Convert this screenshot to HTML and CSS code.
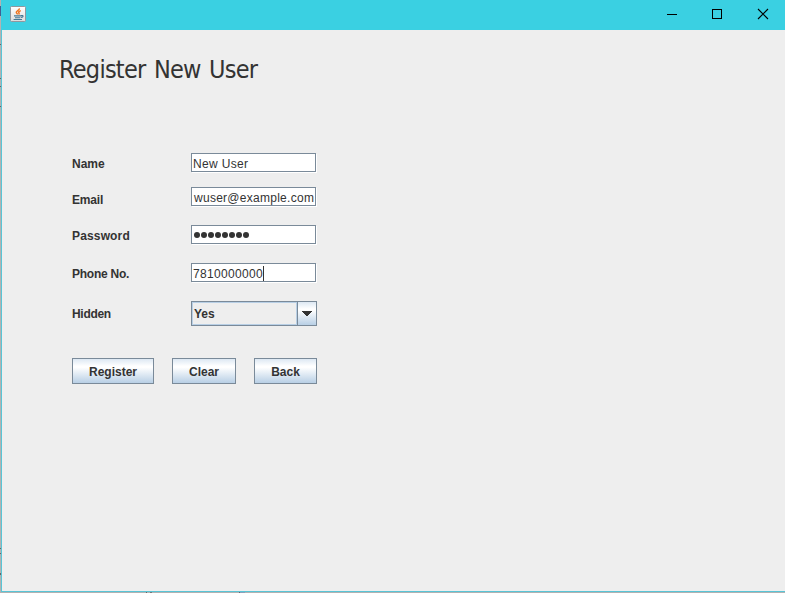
FILE: index.html
```
<!DOCTYPE html>
<html lang="en">
<head>
<meta charset="utf-8">
<title>Register New User</title>
<link rel="stylesheet" href="styles.css">
</head>
<body>
<div class="window">
  <header class="titlebar">
    <svg class="app-icon" width="16" height="16" viewBox="0 0 16 16">
      <defs><linearGradient id="tile" x1="0" y1="0" x2="0" y2="1"><stop offset="0" stop-color="#fff"/><stop offset="1" stop-color="#dcdcdc"/></linearGradient></defs>
      <rect x=".5" y=".5" width="15" height="15" rx="1" fill="url(#tile)" stroke="#92979e"/>
      <path d="M9.4 2.4C9.6 4.4 5.8 4.8 6.3 6.6C6.6 7.5 7.6 7.7 7.6 8.6M10.8 4.6C8.8 5.2 8.2 6.2 9.1 7.2C9.4 7.6 9 8 8.6 8.4" fill="none" stroke="#ee7420" stroke-width="1.5"/>
      <path d="M4 9.9H11M5 11.7H10.4M3.6 13.5H12M11 9.6C13.9 9 13.7 11 11 11.4" fill="none" stroke="#457894" stroke-width="1.1"/>
    </svg>
    <svg class="controls" width="103" height="12" viewBox="0 0 103 12">
      <path d="M1 6.5H11M46.5 1.5H55.5V10.5H46.5Z" fill="none" stroke="#000" shape-rendering="crispEdges"/>
      <path d="M92 1L102 11M102 1L92 11" fill="none" stroke="#000" stroke-width="1.1"/>
    </svg>
  </header>
  <main class="content">
    <h1 class="title">Register New User</h1>
    <form class="form">
      <div class="row row-name"><span class="label">Name</span><div class="field name"><span>New User</span></div></div>
      <div class="row row-email"><span class="label">Email</span><div class="field email"><span>wuser@example.com</span></div></div>
      <div class="row row-password"><span class="label">Password</span><div class="field password"><i></i><i></i><i></i><i></i><i></i><i></i><i></i><i></i></div></div>
      <div class="row row-phone"><span class="label">Phone No.</span><div class="field"><span>7810000000</span><b class="caret"></b></div></div>
      <div class="row row-hidden"><span class="label">Hidden</span>
        <div class="combo"><span class="combo-value">Yes</span><span class="combo-arrow"><svg width="10" height="5" viewBox="0 0 10 5" shape-rendering="crispEdges"><path d="M0 0H10V1H9V2H8V3H7V4H6V5H4V4H3V3H2V2H1V1H0Z" fill="#333"/></svg></span></div>
      </div>
      <div class="buttons">
        <button type="button" class="button register">Register</button>
        <button type="button" class="button clear">Clear</button>
        <button type="button" class="button back">Back</button>
      </div>
    </form>
  </main>
</div>
</body>
</html>
```
FILE: styles.css
```
* { box-sizing: border-box; }
body {
  margin: 0;
  padding: 0 0 1px 1px;
  height: 593px;
  overflow: hidden;
  /* bits of the desktop behind the window edge */
  background:
    linear-gradient(#3f5f93, #3f5f93) 0 6px / 1px 10px no-repeat,
    linear-gradient(#666, #666) 0 44px / 1px 1px no-repeat,
    linear-gradient(#666, #666) 0 78px / 1px 1px no-repeat,
    linear-gradient(#666, #666) 0 86px / 1px 1px no-repeat,
    linear-gradient(#666, #666) 0 106px / 1px 1px no-repeat,
    linear-gradient(#666, #666) 0 548px / 1px 1px no-repeat,
    linear-gradient(#666, #666) 0 553px / 1px 1px no-repeat,
    linear-gradient(#666, #666) 0 573px / 1px 2px no-repeat,
    linear-gradient(#666, #666) 146px 592px / 1px 1px no-repeat,
    linear-gradient(#777, #777) 150px 592px / 2px 1px no-repeat,
    linear-gradient(#667, #667) 239px 592px / 1px 1px no-repeat,
    linear-gradient(#8f9fb8, #8f9fb8) 240px 592px / 5px 1px no-repeat,
    #b2b2b2;
  color: #333;
  font: 12px/16px "Liberation Sans", Arial, sans-serif;
}
.window {
  height: 592px;
  background: #eee;
  border: solid #58c5d6;
  border-width: 0 0 1px 1px;
}
.titlebar {
  display: flex;
  justify-content: space-between;
  height: 30px;
  margin-left: -1px;
  padding: 6px 16px 0 9px;
  background: #3ad0e2;
}
.controls { margin-top: 2px; }
.content { padding: 22px 0 0 57px; }
.title {
  margin: 0;
  height: 36px;
  font: 25px/36px "DejaVu Sans Condensed", "DejaVu Sans", sans-serif;
  font-stretch: condensed;
  letter-spacing: -0.75px;
  word-spacing: 2px;
  white-space: nowrap;
}
.form { width: 245px; margin: 65px 0 0 13px; }
.row { display: flex; align-items: flex-start; }
.label { flex: none; width: 119px; font-weight: bold; }
.row-name { height: 34px; }
.row-email { height: 38px; }
.row-password, .row-phone { height: 38px; }
.row-hidden { height: 57px; }
.row-name .label { padding-top: 3px; }
.row-email .label { padding-top: 5px; letter-spacing: -0.2px; }
.row-password .label, .row-phone .label { padding-top: 3px; }
.row-password .label { letter-spacing: 0.15px; }
.row-phone .label { letter-spacing: -0.25px; }
.row-hidden .label { padding-top: 5px; letter-spacing: -0.3px; }
.field {
  display: flex;
  flex: none;
  align-items: center;
  width: 125px;
  height: 19px;
  padding: 2px 0 0 1px;
  background: #fff;
  border: 1px solid #7a8a99;
  box-shadow: 1px 1px #fff;
  letter-spacing: 0.33px;
  white-space: nowrap;
  overflow: hidden;
}
.email { padding-left: 2px; letter-spacing: 0.27px; }
.password { gap: 1px; padding: 1px 0 0 1.5px; }
.password i { width: 6px; height: 6px; border-radius: 50%; background: #333; }
.caret { width: 1px; height: 16px; background: #333; }
.combo {
  display: flex;
  flex: none;
  width: 126px;
  height: 25px;
  border: 1px solid #7a8a99;
  font-weight: bold;
}
.combo-value { flex: 1; padding: 3px 0 0 1px; border: 1px solid #b8cfe5; }
.combo-arrow {
  display: flex;
  align-items: center;
  justify-content: center;
  width: 19px;
  border-left: 1px solid #7a8a99;
  background: linear-gradient(#dde8f3, #fff 30%, #fff 35%, #b8cfe5);
}
.combo-arrow svg { flex: none; }
.buttons { display: flex; justify-content: space-between; }
.button {
  height: 26px;
  padding: 1px 0 0;
  border: 1px solid #7a8a99;
  background: linear-gradient(#dde8f3, #fff 30%, #fff 35%, #b8cfe5);
  color: #333;
  font: bold 12px/16px "Liberation Sans", Arial, sans-serif;
}
.register { width: 82px; }
.clear { width: 64px; }
.back { width: 63px; }
```
